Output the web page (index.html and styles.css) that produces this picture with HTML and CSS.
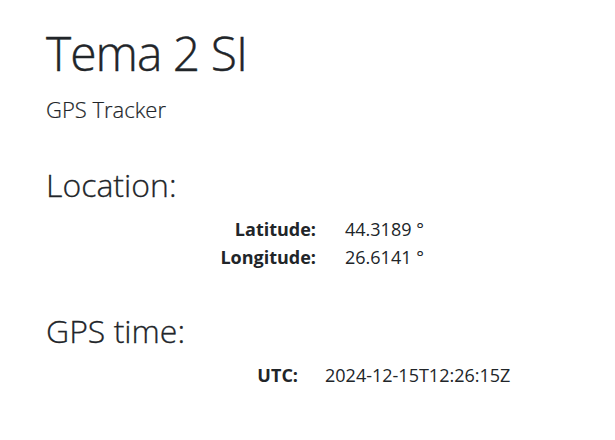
FILE: index.html
```html
<!DOCTYPE html>
<html lang="en">
<head>
  <meta charset="UTF-8">
  <meta name="viewport" content="width=device-width, initial-scale=1.0">
  <title>Tema 2 SI</title>
  <link rel="stylesheet" href="styles.css">
</head>
<body>

  <div class="page">
    <h1 class="title">Tema 2 SI</h1>
    <p class="subtitle">GPS Tracker</p>

    <!-- Location block -->
    <h2 class="section-title">Location:</h2>
    <table class="info-table location-table">
      <tr>
        <td class="label">Latitude:</td>
        <td class="value" id="lat">44.3189 °</td>
      </tr>
      <tr>
        <td class="label">Longitude:</td>
        <td class="value" id="lon">26.6141 °</td>
      </tr>
    </table>

    <!-- Time block -->
    <h2 class="section-title time-title">GPS time:</h2>
    <table class="info-table time-table">
      <tr>
        <td class="label">UTC:</td>
        <td class="value" id="utc">2024-12-15T12:26:15Z</td>
      </tr>
    </table>
  </div>

</body>
</html>
```

FILE: styles.css
```css
/* Global Styles */
* {
  margin: 0;
  padding: 0;
  box-sizing: border-box;
}

body {
  font-family: 'Open Sans', 'Noto Sans', sans-serif;
  background-color: #fff;
  color: #212529;
}

.page {
  padding: 25px 0 0 46px;
}

.title {
  font-size: 48px;
  font-weight: 300;
  -webkit-text-stroke: 0.4px #212529;
  line-height: 56px;
  letter-spacing: -1px;
}

.subtitle {
  font-size: 22px;
  font-weight: 300;
  -webkit-text-stroke: 0.2px #212529;
  line-height: 28px;
  margin-top: 14px;
}

.section-title {
  font-size: 32px;
  font-weight: 300;
  -webkit-text-stroke: 0.3px #212529;
  line-height: 36px;
  margin-top: 44px;
}

.time-title {
  margin-top: 42px;
}

/* Label / value tables */
.info-table {
  border-collapse: collapse;
  margin-top: 12px;
  font-size: 18px;
}

.info-table td {
  line-height: 28px;
  padding: 0;
  white-space: nowrap;
}

.info-table .label {
  font-weight: 700;
  text-align: right;
}

.location-table .label {
  width: 299px;
  padding-right: 29px;
}

.time-table .label {
  width: 279px;
  padding-right: 27px;
}
```
